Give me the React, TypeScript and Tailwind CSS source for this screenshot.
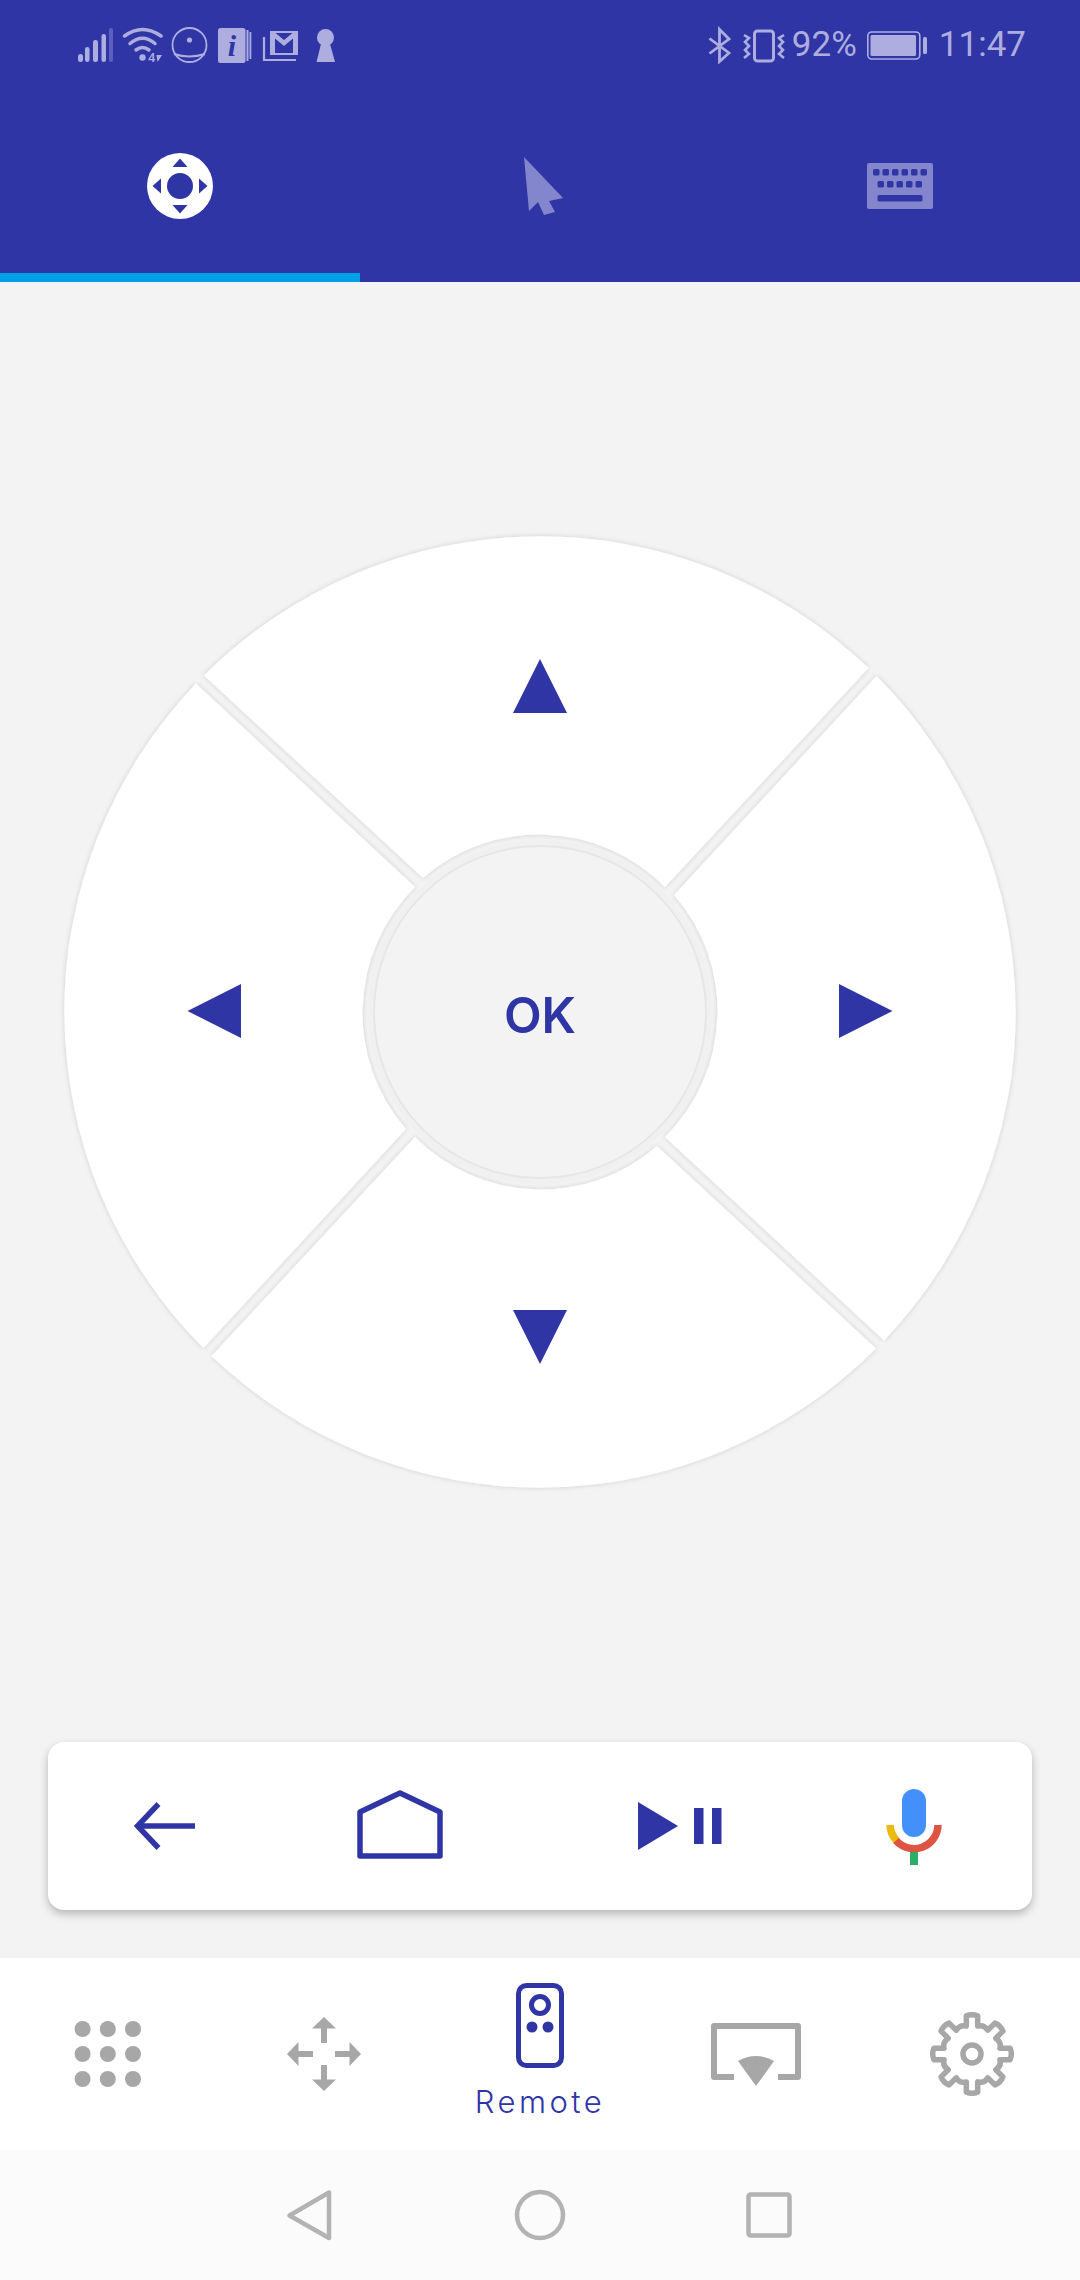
import React from "react";

const BLUE = "#3035a6";
const ST = "#adaddf";
const TAB = "#8486cd";
const GREY = "#a7a7a7";

function gearPath() {
  const cx = 972, cy = 2054;
  const rOut = 38.5, rIn = 28.5;
  let d = "";
  for (let i = 0; i < 8; i++) {
    const a = (i * 45 - 90) * Math.PI / 180;
    const t = 8.5 * Math.PI / 180;
    const b = 11.5 * Math.PI / 180;
    const p = (r: number, an: number) => `${(cx + r * Math.cos(an)).toFixed(1)} ${(cy + r * Math.sin(an)).toFixed(1)}`;
    d += (i === 0 ? "M" : "L") + p(rIn, a - b);
    d += "L" + p(rOut, a - t);
    d += "Q" + p(rOut + 2, a) + " " + p(rOut, a + t);
    d += "L" + p(rIn, a + b);
    const mid = a + 22.5 * Math.PI / 180;
    const next = a + 45 * Math.PI / 180 - b;
    d += "Q" + p(rIn + 3.5, mid) + " " + p(rIn, next);
  }
  return d + "Z";
}

function StatusLeft() {
  return (
    <div className="flex items-center pl-[77px]">
      <svg className="h-[36px] w-[37px]" viewBox="77 27 37 36">
        <rect x="78" y="54" width="5" height="8" rx="2.5" fill={ST} />
        <rect x="85" y="47" width="4.5" height="15" rx="2.2" fill={ST} />
        <rect x="93" y="40" width="5" height="22" rx="2.2" fill={ST} />
        <rect x="101.5" y="34" width="4.5" height="28" rx="2.2" fill={ST} />
        <rect x="109" y="28" width="4" height="34" rx="2" fill="#5c5fbb" />
      </svg>
      <svg className="ml-[8px] h-[36px] w-[42px]" viewBox="122 27 42 36" fill="none" stroke={ST} strokeLinecap="round">
        <path d="M124.500 36Q142.500 23 161 36" strokeWidth="3.5" />
        <path d="M130 43.500Q142.500 33 155 43.500" strokeWidth="3.5" />
        <path d="M136 50Q142.500 45 149 50" strokeWidth="3.5" />
        <circle cx="142.500" cy="57.500" r="3.200" fill={ST} stroke="none" />
        <text x="148" y="62" fontSize="13" fontWeight="500" fontFamily="Roboto" fill={ST} stroke="none">4</text>
        <path d="M156.500 55L162 55L157.500 62Z" fill={ST} stroke="none" />
      </svg>
      <svg className="ml-[7px] h-[38px] w-[37px]" viewBox="170 26 37 38" fill="none" stroke={ST} strokeWidth="1.8">
        <circle cx="188.5" cy="45" r="17" />
        <circle cx="188.5" cy="40" r="2.6" fill={ST} stroke="none" />
        <path d="M173 54Q188 59 204 54" strokeWidth="2" />
      </svg>
      <svg className="ml-[9px] h-[38px] w-[35px]" viewBox="216 26 35 38">
        <rect x="217" y="28" width="27.5" height="35" rx="2.5" fill={ST} />
        <rect x="245.5" y="30" width="2" height="31" fill={ST} />
        <rect x="248.5" y="32" width="1.8" height="27" fill={ST} />
        <text x="231" y="56" textAnchor="middle" fontSize="30" fontWeight="700" fontStyle="italic" fontFamily="Liberation Serif" fill={BLUE}>i</text>
      </svg>
      <svg className="ml-[10px] h-[36px] w-[37px]" viewBox="260 27 37 36" fill="none" stroke={ST}>
        <path d="M262 37V60H294" strokeWidth="2.2" />
        <rect x="269" y="32" width="26" height="22" strokeWidth="2" />
        <path d="M270 33L282 43L294 33" strokeWidth="4.500" />
        <path d="M271.500 33V54M292.500 33V54" strokeWidth="3" />
      </svg>
      <svg className="ml-[17px] h-[36px] w-[20px]" viewBox="314 27 20 36" fill={ST}>
        <circle cx="323.5" cy="37.5" r="8.5" />
        <path d="M319.5 42H327.5L333 62H314.5Z" />
      </svg>
    </div>
  );
}

function StatusRight() {
  return (
    <div className="flex items-center pr-[54px]">
      <svg className="h-[38px] w-[23px]" viewBox="708 26 23 38" fill="none" stroke={ST} strokeWidth="2.8">
        <path d="M709.5 38.5L729 53L719.5 61.5V29.5L729 39L709.5 53.5" />
      </svg>
      <svg className="ml-[11px] h-[36px] w-[44px]" viewBox="741 27 44 36" fill="none" stroke={ST}>
        <rect x="753.5" y="31" width="19" height="30" rx="3" strokeWidth="3" />
        <path d="M743 35L748 38L744 42L748 46L744 50L748 54L743 58" strokeWidth="2.6" />
        <path d="M783 35L778 38L782 42L778 46L782 50L778 54L783 58" strokeWidth="2.6" />
      </svg>
      <span className="ml-[6px] text-[35px] leading-[40px] text-[#adaddf] font-['Roboto',sans-serif]">92%</span>
      <svg className="ml-[10px] h-[36px] w-[61px]" viewBox="866 27 61 36">
        <rect x="866.8" y="32" width="52" height="27" rx="4" fill="none" stroke={ST} strokeWidth="1.6" />
        <rect x="869.5" y="35" width="45.5" height="21" rx="1.5" fill={ST} />
        <rect x="922" y="37" width="4" height="17" rx="1.5" fill={ST} />
      </svg>
      <span className="ml-[11px] text-[35px] leading-[40px] text-[#adaddf] font-['Roboto',sans-serif]">11:47</span>
    </div>
  );
}

function Tabs() {
  return (
    <div className="grid grid-cols-3">
      <div className="flex h-[192px] items-center justify-center border-b-[9px] border-[#00a0e6] pt-[9px]">
        <svg className="h-[68px] w-[68px]" viewBox="146 152 68 68">
          <circle cx="180" cy="186" r="33" fill="#fff" />
          <circle cx="180" cy="186" r="13" fill={BLUE} />
          <path d="M180 158.5L187.5 167H172.5Z" fill={BLUE} />
          <path d="M180 213.5L187.5 205H172.5Z" fill={BLUE} />
          <path d="M152.5 186L161 178.5V193.5Z" fill={BLUE} />
          <path d="M207.500 186L199 178.500V193.500Z" fill={BLUE} />
        </svg>
      </div>
      <div className="flex h-[192px] items-center justify-center pl-[8px]">
        <svg className="h-[60px] w-[42px]" viewBox="524 157 42 60" fill={TAB}>
          <path d="M525 158L564 199L550 202L556 213L545 216L539 203L530 212Z" />
        </svg>
      </div>
      <div className="flex h-[192px] items-center justify-center">
        <svg className="h-[46px] w-[66px]" viewBox="867 164 66 46">
          <rect x="867" y="164" width="66" height="46" rx="2" fill={TAB} />
          {[873, 882.500, 892, 901.500, 911, 920.500].map((x) => (
            <rect key={x} x={x} y="170" width="6.500" height="6.500" rx="1.500" fill={BLUE} />
          ))}
          {[877.500, 887, 896.500, 906, 915.500].map((x) => (
            <rect key={x} x={x} y="182" width="6.500" height="6.500" rx="1.500" fill={BLUE} />
          ))}
          <rect x="877.500" y="196" width="45" height="6.500" rx="1.500" fill={BLUE} />
        </svg>
      </div>
    </div>
  );
}

const WEDGE = "M204 675.500A475.500 475.500 0 0 1 868.500 668L665 887A177 177 0 0 0 423 878Z";

function Pad() {
  return (
    <div className="relative flex justify-center pt-[242px]">
      <svg className="h-[976px] w-[976px]" viewBox="52 524 976 976">
        <defs>
          <filter id="sh" x="-10%" y="-10%" width="120%" height="120%">
            <feDropShadow dx="0" dy="0" stdDeviation="2.500" floodColor="#000" floodOpacity="0.16" />
          </filter>
        </defs>
        <circle cx="540" cy="1012" r="172" fill="#f0f0f0" />
        {[0, 90, 180, 270].map((r) => (
          <g key={r} transform={`rotate(${r} 540 1012)`}>
            <path d={WEDGE} fill="#fff" filter="url(#sh)" />
          </g>
        ))}
        <circle cx="540" cy="1012" r="166" fill="#f3f3f3" stroke="#e6e6e6" strokeWidth="2" />
        <path d="M513 713L540 659L567 713Z" fill={BLUE} />
        <path d="M513 1310L540 1364L567 1310Z" fill={BLUE} />
        <path d="M241 984L187.500 1011L241 1038Z" fill={BLUE} />
        <path d="M839 984L892.500 1011L839 1038Z" fill={BLUE} />
      </svg>
      <span className="absolute left-0 top-[708px] w-full text-center text-[49px] font-semibold leading-[52px] text-[#3035a6] font-['Inter',sans-serif]">OK</span>
    </div>
  );
}

function Card() {
  return (
    <div className="mx-[48px] mb-[48px] flex h-[168px] items-center rounded-[16px] bg-white pl-[86px] shadow-[0_4px_8px_rgba(0,0,0,0.25)]">
      <svg className="h-[80px] w-[62px]" viewBox="134 1786 62 80" fill="none" stroke={BLUE} strokeWidth="5.500">
        <path d="M195 1826H139" />
        <path d="M158.500 1804L137.500 1826L158.500 1848" />
      </svg>
      <svg className="ml-[160px] h-[80px] w-[88px]" viewBox="357 1786 88 80" fill="none" stroke={BLUE} strokeWidth="5.500" strokeLinejoin="round">
        <path d="M361 1812L401 1793L441 1812V1856H361Z" />
      </svg>
      <svg className="ml-[193px] h-[80px] w-[85px]" viewBox="637 1786 85 80" fill={BLUE}>
        <path d="M638 1802L678 1826L638 1850Z" />
        <rect x="694" y="1808" width="9.500" height="36" />
        <rect x="712" y="1808" width="9.500" height="36" />
      </svg>
      <svg className="ml-[163px] h-[80px] w-[58px]" viewBox="886 1786 58 80" fill="none">
        <rect x="903" y="1789" width="24" height="48" rx="12" fill="#4490fb" />
        <path d="M891 1825A24 24 0 0 0 898 1841" stroke="#eabb0b" strokeWidth="7.500" />
        <path d="M897 1840.500A24 24 0 0 0 939 1825" stroke="#dd5442" strokeWidth="7.500" />
        <rect x="911" y="1852" width="8" height="13" fill="#2bae66" />
      </svg>
    </div>
  );
}

function BottomNav() {
  const dots = [82.6, 107.8, 133];
  const rows = [2029, 2054, 2079];
  return (
    <div className="grid h-[192px] grid-cols-5 bg-white">
      <div className="flex items-center justify-center">
        <svg className="h-[68px] w-[68px]" viewBox="74 2020 68 68" fill={GREY}>
          {rows.map((y) => dots.map((x) => <circle key={`${x}${y}`} cx={x} cy={y} r="8" />))}
        </svg>
      </div>
      <div className="flex items-center justify-center">
        <svg className="h-[78px] w-[78px]" viewBox="-39 -39 78 78" fill={GREY}>
          {[0, 90, 180, 270].map((r) => (
            <path key={r} transform={`rotate(${r})`} d="M0 -37L12 -25.500H3V-11H-3V-25.500H-12Z" />
          ))}
        </svg>
      </div>
      <div className="flex flex-col items-center pt-[25px]">
        <svg className="h-[85px] w-[48px]" viewBox="516 1983 48 85" fill="none" stroke={BLUE}>
          <rect x="518.500" y="1985.500" width="43" height="80" rx="8" strokeWidth="5" />
          <circle cx="540" cy="2005" r="8.500" strokeWidth="5" />
          <circle cx="532" cy="2027" r="5.500" fill={BLUE} stroke="none" />
          <circle cx="548" cy="2027" r="5.500" fill={BLUE} stroke="none" />
        </svg>
        <span className="mt-[16px] text-[31px] font-light leading-[36px] tracking-[3.5px] text-[#3035a6] font-['Inter',sans-serif]">Remote</span>
      </div>
      <div className="flex items-center justify-center">
        <svg className="h-[68px] w-[92px]" viewBox="710 2021 92 68">
          <path d="M734 2078H714V2027H798V2078H778" fill="none" stroke={GREY} strokeWidth="6" strokeLinejoin="round" />
          <path d="M738 2062Q756 2052 774 2062L756 2087Z" fill={GREY} />
        </svg>
      </div>
      <div className="flex items-center justify-center">
        <svg className="h-[88px] w-[88px]" viewBox="928 2010 88 88" fill="none" stroke={GREY} strokeWidth="5.500" strokeLinejoin="round">
          <path d={gearPath()} />
          <circle cx="972" cy="2054" r="9" />
        </svg>
      </div>
    </div>
  );
}

function SystemNav() {
  return (
    <div className="flex h-[130px] items-center bg-[#fbfbfb] pl-[286px]">
      <svg className="h-[52px] w-[46px]" viewBox="286 2188 46 52" fill="none" stroke="#b3b3b3" strokeWidth="4.500" strokeLinejoin="round">
        <path d="M329 2191.500V2237L289.500 2214.500Z" />
      </svg>
      <svg className="ml-[182px] h-[52px] w-[52px]" viewBox="514 2188 52 52" fill="none" stroke="#b3b3b3" strokeWidth="4.500">
        <circle cx="540" cy="2214" r="23" />
      </svg>
      <svg className="ml-[179px] h-[48px] w-[48px]" viewBox="745 2190 48 48" fill="none" stroke="#b3b3b3" strokeWidth="4.500" strokeLinejoin="round">
        <rect x="748.500" y="2193.500" width="41" height="41" rx="2" />
      </svg>
    </div>
  );
}

export default function App() {
  return (
    <div className="flex h-[2280px] w-[1080px] flex-col overflow-hidden bg-[#f3f3f3]">
      <div className="bg-[#3035a6]">
        <div className="flex h-[90px] items-center justify-between">
          <StatusLeft />
          <StatusRight />
        </div>
        <Tabs />
      </div>
      <div className="flex flex-1 flex-col justify-between">
        <Pad />
        <Card />
      </div>
      <BottomNav />
      <SystemNav />
    </div>
  );
}
